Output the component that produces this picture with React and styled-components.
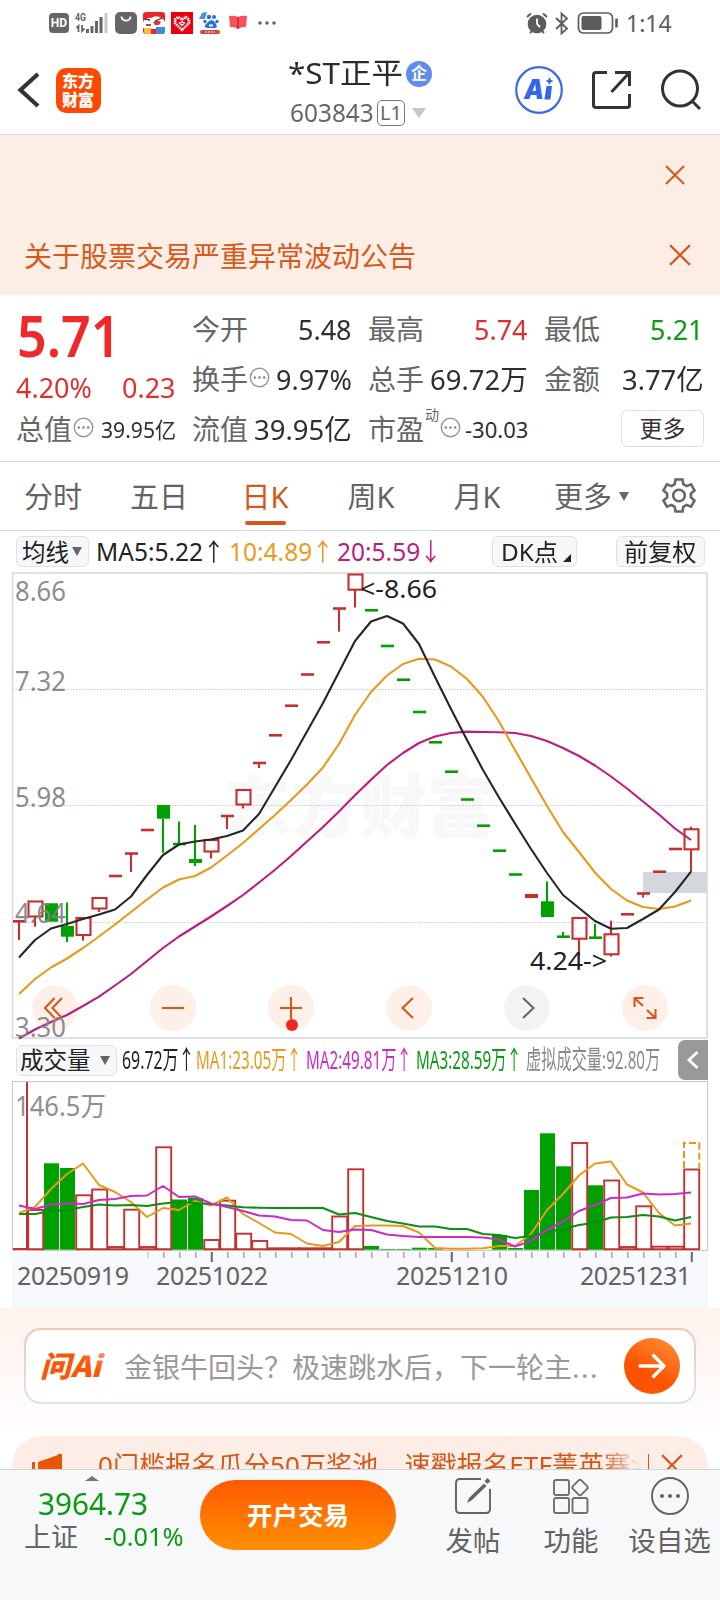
import React, { useLayoutEffect, useRef, useState } from 'react';
import styled, { createGlobalStyle, css } from 'styled-components';

const GlobalStyle = createGlobalStyle`
  * { box-sizing: border-box; }
  body {
    margin: 0;
    background: #fff;
    color: #2b2b2b;
    font-family: 'Noto Sans', 'Noto Sans CJK SC', sans-serif;
  }
  svg { display: block; flex: none; overflow: visible; }
`

const RED = '#c5302f';
const GREEN = '#00a000';
const ORANGE = '#e8991c';
const PURPLE = '#bd1b80';

const Screen = styled.div`
  width: 720px;
  height: 1600px;
  overflow: hidden;
  display: flex;
  flex-direction: column;
  background: #fff;
`

/* text squeezed to a fixed width */
const FitBox = styled.span`
  display: inline-block;
  flex: none;
  width: ${p => p.$w}px;
  white-space: nowrap;
  span {
    display: inline-block;
    transform-origin: left center;
  }
`

const Fit = ({ w, children, className }) => {
  const ref = useRef(null);
  const [scale, setScale] = useState(1);

  useLayoutEffect(() => {
    setScale(w / ref.current.offsetWidth);
  }, [w, children]);

  return (
    <FitBox $w={w} className={className}>
      <span ref={ref} style={{ transform: `scaleX(${scale})` }}>{children}</span>
    </FitBox>
  );
};

/* ---------- status bar ---------- */

const StatusBar = styled.div`
  height: 46px;
  padding: 0 48px 0 49px;
  display: flex;
  align-items: center;
  justify-content: space-between;
`

const StatusGroup = styled.div`
  display: flex;
  align-items: center;
  gap: ${p => p.$gap}px;
`

const HdBadge = styled.div`
  width: 20px;
  height: 20px;
  border-radius: 4px;
  background: #666;
  color: #fff;
  font: 700 12px/20px 'Roboto', sans-serif;
  text-align: center;
`

const Clock = styled.div`
  font-size: 23px;
  line-height: 24px;
  margin-left: 2px;
  color: #5c5c5c;
`

const Status = () => (
  <StatusBar>
    <StatusGroup $gap={6}>
      <HdBadge>HD</HdBadge>
      <svg width="34" height="22" viewBox="0 0 34 22">
        <text x="0" y="9" fontSize="10.500" fontWeight="700" fontFamily="Roboto" fill="#666" textLength="11" lengthAdjust="spacingAndGlyphs">4G</text>
        <path d="M3.500 20v-6l-2 2M7 13v6l2.500-2.500" stroke="#666" strokeWidth="1.800" fill="none" />
        <path d="M12.500 17v4M17 14v7M21.500 9v12M26 5v16" stroke="#666" strokeWidth="3" />
        <path d="M31 1v20" stroke="#c8c8c8" strokeWidth="3" />
      </svg>
      <svg width="22" height="22" viewBox="0 0 22 22">
        <rect width="22" height="22" rx="5" fill="#666" />
        <path d="M6.500 4.500c0 5.500 9 5.500 9 0" stroke="#fff" strokeWidth="1.800" fill="none" />
      </svg>
      <svg width="22" height="22" viewBox="0 0 22 22">
        <rect width="22" height="22" rx="3" fill="#e8262c" />
        <path d="M0 10Q3 5 8 6q6-4 12 1l2 3v7H9l-9-1Z" fill="#fff" />
        <path d="M10 10q5-3 8 0l-2 3h-4Z" fill="#d63a36" />
        <path d="M2 7l5 1M12 9l7-3M3 13h5" stroke="#55282a" strokeWidth="1.300" />
        <path d="M1 16h7v6H3q-2 0-2-2Z" fill="#fbbf2c" />
        <path d="M13 15h9v4q0 3-3 3h-6Z" fill="#3f8ae6" />
      </svg>
      <svg width="22" height="22" viewBox="0 0 22 22">
        <rect width="22" height="22" fill="#e60012" />
        <path d="M11 18L4 11V7.500L7 5l4 2.500L15 5l3 2.500V11Z" fill="none" stroke="#fff" strokeWidth="2.600" strokeDasharray="1.500 .7" />
        <path d="M11 13.500L8.500 11l2.500-1 2.500 1Z" fill="none" stroke="#fff" strokeWidth="1.200" />
      </svg>
      <svg width="23" height="22" viewBox="0 0 23 22">
        <path d="M0 7l3-6 5-1-2 7Z" fill="#4a90e2" />
        <g fill="#2a70d8">
          <circle cx="10" cy="5" r="2.200" /><circle cx="15" cy="5" r="2" />
          <circle cx="6" cy="9.500" r="1.700" /><circle cx="18" cy="9.500" r="1.700" />
          <path d="M12 8q3 0 5 4t-1 4H8q-4-1-1-4t5-4Z" />
        </g>
        <path d="M10 12.500h4v2h-4Z" fill="#fff" />
        <rect x="1" y="18" width="20" height="4" rx="2" fill="#d4443c" />
        <path d="M6 20h10" stroke="#fff" strokeDasharray="2 1" />
      </svg>
      <svg width="20" height="16" viewBox="0 0 20 16">
        <path d="M1 1q5-1 9 1 4-2 9-1l-1 11q-5-.5-8 2-3-2.500-8-2Z" fill="#f5525c" />
        <path d="M10 2v12" stroke="#cc2b3b" strokeWidth="1.500" />
      </svg>
      <svg width="22" height="4" viewBox="0 0 22 4" fill="#666">
        <circle cx="6" cy="2" r="1.800" /><circle cx="13" cy="2" r="1.800" /><circle cx="20" cy="2" r="1.800" />
      </svg>
    </StatusGroup>
    <StatusGroup $gap={6}>
      <svg width="22" height="22" viewBox="0 0 22 22">
        <circle cx="11" cy="12" r="9.300" fill="#5c5c5c" />
        <path d="M1 5l4-3.500M21 5l-4-3.500M4 21l2-2M18 21l-2-2" stroke="#5c5c5c" strokeWidth="2" />
        <path d="M11 6.500V12l3 3" stroke="#fff" strokeWidth="1.800" fill="none" />
      </svg>
      <svg width="16" height="23" viewBox="0 0 16 23">
        <path d="M2 6l11 10.500-5.500 5V1.500l5.500 5L2 17" stroke="#5c5c5c" strokeWidth="1.800" fill="none" />
      </svg>
      <svg width="42" height="22" viewBox="0 0 42 22">
        <rect x="2.500" y="1" width="34" height="20" rx="5" fill="none" stroke="#5c5c5c" strokeWidth="1.700" />
        <rect x="5.500" y="4" width="20" height="14" rx="2" fill="#5c5c5c" />
        <path d="M40.500 6.500v9" stroke="#5c5c5c" strokeWidth="2.600" />
      </svg>
      <Clock><Fit w={46}>1:14</Fit></Clock>
    </StatusGroup>
  </StatusBar>
);

/* ---------- title bar ---------- */

const TitleBar = styled.header`
  height: 89px;
  padding: 0 18px 0 17px;
  display: grid;
  grid-template-columns: 1fr auto 1fr;
  align-items: center;
  border-bottom: 1px solid #d8dad8;
`

const TitleSide = styled.div`
  display: flex;
  align-items: center;
  justify-content: ${p => (p.$end ? 'flex-end' : 'flex-start')};
  gap: ${p => (p.$end ? 28.500 : 15.500)}px;
`

const BrandLogo = styled.div`
  width: 45px;
  height: 45px;
  padding: 3px 0;
  border-radius: 10px;
  background: #fe4a00;
  color: #fff;
  font-family: 'Noto Sans CJK SC', sans-serif;
  font-size: 16px;
  font-weight: 900;
  line-height: 19px;
  text-align: center;
`

const StockName = styled.div`
  display: flex;
  align-items: center;
  gap: 3px;
  height: 40px;
  padding-left: 1px;
  font-size: 29px;
  line-height: 36px;
  > span { margin-top: -1px; }
`

const CompanyBadge = styled.div`
  width: 26px;
  height: 26px;
  border-radius: 50%;
  background: #5f8eea;
  color: #fff;
  font-size: 16px;
  font-weight: 700;
  line-height: 25px;
  text-align: center;
`

const StockCode = styled.div`
  display: flex;
  align-items: center;
  gap: 3px;
  height: 30px;
  margin-top: 3px;
  padding-left: 3px;
  font-size: 25px;
  line-height: 28px;
  color: #666;
`

const LevelTag = styled.div`
  width: 28px;
  height: 26px;
  margin-top: 2px;
  border: 1.500px solid #777;
  border-radius: 5px;
  font-size: 20px;
  line-height: 23px;
  text-align: center;
`

const Caret = styled.i`
  flex: none;
  border: ${p => p.$size}px solid transparent;
  border-top: ${p => p.$tall || p.$size * 1.500}px solid ${p => p.color || '#666'};
  border-bottom: 0;
`

const CodeCaret = styled(Caret)`
  margin: 2px 0 0 4px;
`

const Title = () => (
  <TitleBar>
    <TitleSide>
      <svg width="23" height="36" viewBox="0 0 23 36">
        <path d="M21 2L3.500 18 21 34" stroke="#333" strokeWidth="4.200" fill="none" />
      </svg>
      <BrandLogo>东方<br />财富</BrandLogo>
    </TitleSide>
    <div>
      <StockName><Fit w={115}>*ST正平</Fit><CompanyBadge>企</CompanyBadge></StockName>
      <StockCode>
        <Fit w={84}>603843</Fit><LevelTag>L1</LevelTag><CodeCaret $size={7} $tall={10} color="#c6c6c6" />
      </StockCode>
    </div>
    <TitleSide $end>
      <svg width="48" height="48" viewBox="0 0 48 48">
        <circle cx="24" cy="24" r="22.800" fill="none" stroke="#3a68ec" strokeWidth="2.200" />
        <text x="9" y="33" fontFamily="Inter" fontSize="27" fontWeight="900" fontStyle="italic" fill="#3366f0" textLength="20" lengthAdjust="spacingAndGlyphs">A</text>
        <path d="M31.500 20h5.500l-1.600 13.500h-6Z" fill="#3366f0" />
        <path d="M34.500 11l1.300 2.700 2.700 1.300-2.700 1.300-1.300 2.700-1.300-2.700-2.700-1.300 2.700-1.300Z" fill="#3366f0" />
      </svg>
      <svg width="40" height="40" viewBox="0 0 40 40" fill="none" stroke="#333" strokeWidth="3">
        <path d="M15 2.500H4q-2.500 0-2.500 2.500v30q0 2.500 2.500 2.500h31q2.500 0 2.500-2.500V24M23 2.500h14.500V16M37.500 2.500L19.500 22" />
      </svg>
      <svg width="42" height="42" viewBox="0 0 42 42" fill="none" stroke="#333" strokeWidth="3">
        <circle cx="20" cy="19.500" r="17.500" /><path d="M32 32l8 8" />
      </svg>
    </TitleSide>
  </TitleBar>
);

/* ---------- notices ---------- */

const Notices = styled.section`
  height: 160px;
  background: #fdeee5;
  color: #d75a1c;
`

const NoticeRow = styled.div`
  height: 80px;
  padding: 0 ${p => p.$right}px 0 24px;
  display: flex;
  align-items: center;
  justify-content: space-between;
  font-size: 28px;
  line-height: 40px;
  span { margin-top: 1px; }
`

const Cross = ({ size }) => (
  <svg width={size} height={size} viewBox="0 0 20 20">
    <path d="M1 1l18 18M19 1L1 19" stroke="#d75a1c" strokeWidth="2" />
  </svg>
);

/* ---------- quote ---------- */

const Quote = styled.section`
  height: 167px;
  padding: 8px 16px 0;
  display: grid;
  grid-template-columns: 160px 160px 160px 160px;
  column-gap: 16px;
  border-bottom: 1px solid #d9d9d9;
`

const Price = styled.div`
  height: 66px;
  padding: 2px 0 0 1px;
  font-size: 57px;
  font-weight: 600;
  line-height: 61px;
  color: #ef2929;
`

const Change = styled.div`
  height: 34px;
  padding-top: 2px;
  display: flex;
  justify-content: space-between;
  font-size: 28px;
  line-height: 32px;
  color: #dd3030;
`

const Field = styled.div`
  height: 50px;
  padding-top: 2px;
  display: flex;
  align-items: center;
  justify-content: space-between;
  font-size: 28px;
  line-height: 40px;
  color: #666;
`

const FieldLabel = styled.div`
  display: flex;
  align-items: center;
  sup {
    align-self: flex-start;
    margin: -4px 0 0 1px;
    font-size: 14px;
    line-height: 20px;
  }
  svg { margin: -4px 0 0 1px; }
`

const tones = { up: '#dd3030', down: '#0b9a12' };

const FieldValue = styled.div`
  color: ${p => tones[p.$tone] || '#2f2f2f'};
  ${p => p.$small && css`
    font-size: 22px;
  `}
`

const MoreButton = styled.button`
  width: 83px;
  height: 37px;
  margin: 7px 0 0 auto;
  padding: 0 0 4px;
  display: block;
  border: 1.500px solid #dcdee0;
  border-radius: 6px;
  background: #fff;
  color: #333;
  font: 23px/30px 'Noto Sans CJK SC', sans-serif;
`

const Dots = () => (
  <svg width="21" height="21" viewBox="0 0 21 21">
    <circle cx="10.500" cy="10.500" r="9.200" fill="none" stroke="#999" strokeWidth="1.500" />
    <g fill="#888"><circle cx="5.800" cy="10.500" r="1.300" /><circle cx="10.500" cy="10.500" r="1.300" /><circle cx="15.200" cy="10.500" r="1.300" /></g>
  </svg>
);

const QuoteField = ({ label, value, w, tone, small, sup, dots }) => (
  <Field>
    <FieldLabel>{label}{sup && <sup>{sup}</sup>}{dots && <Dots />}</FieldLabel>
    <FieldValue $tone={tone} $small={small}><Fit w={w}>{value}</Fit></FieldValue>
  </Field>
);

/* ---------- period tabs ---------- */

const Tabs = styled.nav`
  height: 69px;
  display: flex;
  border-bottom: 1px solid #d9d9d9;
`

const Tab = styled.div`
  width: 106px;
  padding-top: 15px;
  display: flex;
  flex-direction: column;
  align-items: center;
  gap: 4px;
  font-size: 29px;
  line-height: 40px;
  color: ${p => (p.$active ? '#d4581a' : '#636363')};
  &::after {
    content: '';
    width: 41px;
    height: 4px;
    border-radius: 2px;
    background: ${p => (p.$active ? '#d4581a' : 'transparent')};
  }
`

const MoreTab = styled.div`
  width: 107px;
  padding: 1px 0 0 24px;
  display: flex;
  align-items: center;
  gap: 7px;
  font-size: 29px;
  line-height: 40px;
  color: #636363;
  i { margin-top: -1px; }
`

const GearCell = styled.div`
  padding: 16px 0 0 25px;
`

/* ---------- indicator rows ---------- */

const IndicatorRow = styled.div`
  height: ${p => p.$h}px;
  padding-left: 16px;
  display: flex;
  align-items: center;
`

const Pill = styled.div`
  flex: none;
  width: ${p => p.$w}px;
  height: 31px;
  margin-left: ${p => p.$ml || 0}px;
  padding: 0 6px 0 ${p => p.$pl || 6}px;
  display: flex;
  align-items: center;
  justify-content: space-between;
  border: 1.500px solid #dde0e4;
  border-radius: 6px;
  background: #f6f7f9;
  color: #222;
  font-size: 23.500px;
  line-height: 26px;
`

const Corner = styled.i`
  align-self: flex-end;
  margin: 0 -1px 4px 0;
  border-left: 8px solid transparent;
  border-bottom: 8px solid #222;
`

const Average = styled.div`
  margin-left: ${p => p.$ml}px;
  padding-bottom: ${p => (p.$size ? 2 : 0)}px;
  display: flex;
  color: ${p => p.color};
  font-size: ${p => p.$size || 24.500}px;
  line-height: 28px;
`

const Collapse = styled.button`
  width: 30px;
  height: 40px;
  margin: 0 12px 0 auto;
  padding: 0 0 0 9px;
  border: 0;
  border-radius: 7px 0 0 7px;
  background: #999;
`

/* ---------- charts ---------- */

const slot = i => 19 + 16 * i;
const line = ys => ys.map((y, i) => `${slot(i)},${y}`).join(' ');

// kind, body top, body bottom, wick top, wick bottom
const candles = [
  ['r', 921.3, 921.3, 921.3, 940], ['r', 901.5, 916.5, 916.5, 926.7], ['g', 903.3, 921.7], ['g', 926, 936.7, 902.5, 942],
  ['r', 918, 935, 935, 940.7], ['r', 898, 908.5, 908.5, 912], ['r', 876, 876], ['r', 853.5, 853.5, 853.5, 872],
  ['r', 830, 830], ['g', 805, 818.7, 818.7, 852.7], ['g', 844, 844, 821.5, 845], ['g', 859, 863, 825, 866],
  ['r', 840, 851.5, 851.5, 858.5], ['r', 816, 816, 816, 829], ['r', 790, 804.5, 804.5, 808.5], ['r', 763, 763, 763, 768],
  ['r', 735.3, 735.3], ['r', 705.7, 705.7], ['r', 674.5, 674.5], ['r', 642.3, 642.3], ['r', 608.5, 608.5, 608.5, 631.7],
  ['r', 574.5, 589.7, 589.7, 607.5], ['g', 610.3, 610.3], ['g', 646, 646], ['g', 679.7, 679.7], ['g', 712, 712],
  ['g', 742.3, 742.3], ['g', 771.7, 771.7], ['g', 799.5, 799.5], ['g', 825.7, 825.7], ['g', 850.7, 850.7],
  ['g', 874.5, 874.5], ['b', 894, 898], ['g', 901.3, 917, 881.5, 917], ['g', 936.7, 936.7, 932, 937],
  ['r', 918, 938.7, 938.7, 955.5], ['g', 937.7, 937.7, 924, 938], ['r', 934.3, 954.3, 920.7, 956.5], ['r', 914.3, 914.3],
  ['r', 893.5, 893.5, 893.5, 897.5], ['r', 871.7, 871.7], ['r', 849, 849], ['r', 829.3, 849.3, 826.7, 872],
];

const ma5 = [957.5, 940, 928.5, 924, 919, 914.5, 909.5, 896.5, 875, 855, 844.5, 841.5, 839.5, 836, 830.5, 814, 787, 760, 731.500,
  703, 672, 641, 621.5, 616, 623.5, 644, 677, 709, 740, 770, 797.5, 823.5, 849, 873, 895, 908, 921, 928.7, 928, 919, 909.5, 892, 871.7];
const ma10 = [994, 979, 967.5, 958.5, 948, 936.5, 924.5, 912, 899.5, 887.5, 879.5, 876, 867.5, 855.5, 843, 829, 815, 800, 784.5,
  767.5, 744, 715, 692, 675.5, 664, 658.7, 659.5, 666.5, 679, 697, 721.5, 750, 778, 806, 832, 852, 872.5, 889, 900.5, 907, 909, 906.5, 900.5];
const ma20 = [1038.5, 1029.5, 1022, 1015, 1006, 996.7, 985.5, 974, 961, 948, 936.5, 926.5, 916.5, 906, 895, 882.5, 869.7, 856, 841.5,
  827, 811.5, 795.3, 779.7, 765, 753, 743, 736.5, 733, 731.6, 732, 732.3, 733, 736, 741, 748, 756, 765.5, 776.5, 788.5, 801.5, 814.5, 828.5, 840];

const Candle = ({ x, data }) => {
  const [kind, top, bottom, high, low] = data;
  const color = kind === 'g' ? GREEN : RED;
  const flat = bottom - top < 1;
  return (
    <g stroke={color} strokeWidth="2.100">
      {kind === 'r' && !flat && (
        <>
          {high < top && <path d={`M${x} ${high}V${top}`} />}
          {low > bottom && <path d={`M${x} ${bottom}V${low}`} />}
          <rect x={x - 6.500} y={top} width="14" height={bottom - top} fill="#fff" />
        </>
      )}
      {kind !== 'r' && !flat && <rect x={x - 6} y={top} width="13" height={bottom - top} fill={color} stroke="none" />}
      {flat && <path d={`M${x - 6} ${top}h13`} strokeWidth="2.600" />}
      {high && (kind !== 'r' || flat) && <path d={`M${x} ${high}V${low}`} />}
    </g>
  );
};

const PriceChart = () => (
  <svg width="720" height="468" viewBox="0 572 720 468">
    <text x="223" y="832" fontSize="68" fontFamily="Noto Sans CJK SC" fontWeight="900" fill="#f8f8f8" textLength="272">东方财富</text>
    <rect x="12.500" y="573" width="694.500" height="465" fill="none" stroke="#dcdcdc" strokeWidth="1.700" />
    <path d="M13 689.500H707M13 805.500H707M13 922.500H707" stroke="#c9c9c9" strokeDasharray="1.500 1.500" />
    <rect x="643" y="872" width="64" height="21" fill="#d4d8dd" />
    {candles.map((c, i) => <Candle key={i} x={slot(i)} data={c} />)}
    {[55, 173, 291, 409, 527, 645].map(x => (
      <circle key={x} cx={x} cy="1008" r="23" fill={x === 527 ? '#f3f3f4' : '#fef0e8'} />
    ))}
    <g fill="none" strokeWidth="2.100" strokeLinejoin="round">
      <polyline points={line(ma20)} stroke={PURPLE} />
      <polyline points={line(ma10)} stroke={ORANGE} />
      <polyline points={line(ma5)} stroke="#262626" />
    </g>
    <g fill="none" stroke="#d4581a" strokeWidth="2.100">
      <path d="M54.500 998l-9.500 10 9.500 10M62 998l-9.500 10 9.500 10" />
      <path d="M162 1008h22M280 1008h22M291 997v22" />
      <path d="M413 998l-10.500 10 10.500 10" />
      <path d="M523 998l10.500 10-10.500 10" stroke="#666" />
      <path d="M634.500 1007v-9h9M635 998.500l8 7.500M655.500 1009v9h-9M655 1017.500l-8-7.500" />
    </g>
    <circle cx="292" cy="1025" r="6" fill="#f02822" />
    <g fontSize="26.500" fill="#858585" fillOpacity=".95">
      <text x="15" y="600.500" textLength="51" lengthAdjust="spacingAndGlyphs">8.66</text>
      <text x="15" y="690.500" textLength="51" lengthAdjust="spacingAndGlyphs">7.32</text>
      <text x="15" y="807" textLength="51" lengthAdjust="spacingAndGlyphs">5.98</text>
      <text x="15" y="923" textLength="51" lengthAdjust="spacingAndGlyphs">4.64</text>
      <text x="15" y="1036.500" textLength="51" lengthAdjust="spacingAndGlyphs">3.30</text>
    </g>
    <g fontSize="25.500" fill="#222">
      <text x="360" y="597.500" textLength="77" lengthAdjust="spacingAndGlyphs">&lt;-8.66</text>
      <text x="530" y="970" textLength="77" lengthAdjust="spacingAndGlyphs">4.24-&gt;</text>
    </g>
  </svg>
);

// r: hollow rising bar, g: filled falling bar
const volumes = [
  null, ['r', 1210], ['g', 1163.3], ['g', 1168], ['r', 1195.3], ['r', 1189.5], ['r', 1247], ['r', 1209.7], ['r', 1247],
  ['r', 1147.3], ['g', 1199.5], ['g', 1198], ['r', 1240], ['r', 1200.7], ['r', 1233.7], ['r', 1241], ['r', 1248.3],
  ['r', 1248.3], ['r', 1248.3], ['r', 1248.3], ['r', 1216.5], ['r', 1169.3], ['g', 1246], ['g', 1249], ['g', 1249],
  ['g', 1247.7], ['g', 1248], null, null, null, ['g', 1235], ['g', 1248], ['g', 1190], ['g', 1133.3], ['g', 1166.3],
  ['r', 1143], ['g', 1185.3], ['r', 1180.500], ['r', 1247], ['r', 1206.3], ['r', 1246.7], ['r', 1246.7], ['r', 1169.5],
];

const vol1 = [1213, 1207, 1189, 1174, 1163.5, 1185, 1192, 1202, 1217, 1208, 1210, 1201, 1205.5, 1197.5, 1214, 1223, 1232.5, 1234,
  1243.5, 1246, 1242, 1226, 1225.5, 1225.5, 1226, 1232.5, 1248, 1248.7, 1248.7, 1248.3, 1246, 1246, 1234, 1210, 1194, 1175.5, 1163.5,
  1161.5, 1184.5, 1192.5, 1213, 1225.5, 1223.5];
const vol2 = [1205.5, 1209, 1204.5, 1203.3, 1204, 1200, 1199, 1196, 1195.5, 1186, 1197, 1196.5, 1203.5, 1207, 1211, 1215.5, 1216.5,
  1220, 1220.5, 1230, 1232, 1229.5, 1230, 1234.5, 1236, 1237, 1237, 1237, 1237, 1237.5, 1239.5, 1246.5, 1241, 1230, 1221.5, 1211, 1205,
  1198, 1197.5, 1193.5, 1194.5, 1194, 1192.5];
const vol3 = [1214, 1214, 1211, 1210, 1207, 1204.5, 1205.5, 1205, 1206, 1203.5, 1202, 1203, 1204, 1205.5, 1207.3, 1207.7, 1208, 1208,
  1208, 1208, 1214.5, 1213, 1217, 1221, 1223.5, 1226.5, 1226.5, 1229, 1229, 1234, 1235, 1238, 1236, 1232, 1229, 1225, 1222.5, 1217.5,
  1217, 1215, 1216.5, 1220.5, 1217];

const VolumeChart = () => (
  <svg width="720" height="228" viewBox="0 1080 720 228">
    <rect x="12" y="1251" width="696" height="57" fill="#f7f8fb" />
    <rect x="12.500" y="1081.500" width="695" height="169" fill="#fff" stroke="#c8c8c8" />
    <text x="15" y="1116" fontSize="27" fill="#8f8f8f" textLength="91" lengthAdjust="spacingAndGlyphs">146.5万</text>
    <path d="M27 1082V1249H13" fill="none" stroke={RED} strokeWidth="2" />
    {volumes.map((v, i) => v && (v[0] === 'g'
      ? <rect key={i} x={slot(i) - 7} y={v[1]} width="15" height={1249.7 - v[1]} fill={GREEN} />
      : <rect key={i} x={slot(i) - 6.800} y={v[1]} width="15" height={1249.2 - v[1]} fill="#fff" stroke={RED} strokeWidth="1.900" />
    ))}
    <path d="M684 1168V1143H699.300V1168" fill="none" stroke={ORANGE} strokeWidth="2" strokeDasharray="7 3" />
    <g fill="none" strokeWidth="2" strokeLinejoin="round">
      <polyline points={line(vol1)} stroke={ORANGE} />
      <polyline points={line(vol3)} stroke="#0a8f14" />
      <polyline points={line(vol2)} stroke="#c92bc8" />
    </g>
    {volumes.map((v, i) => i > 7 && (
      <path
        key={i}
        d={`M${slot(i) + 0.800} 1252V${i % 15 === 12 ? 1262 : 1258}`}
        stroke={i % 15 === 12 ? '#666' : i === 8 ? '#ccc' : '#a8a8a8'}
        strokeWidth={i % 15 === 12 ? 2 : 1.500}
      />
    ))}
    <g fontSize="25" fill="#636363">
      <text x="17" y="1285" textLength="112">20250919</text>
      <text x="156" y="1285" textLength="112">20251022</text>
      <text x="396" y="1285" textLength="112">20251210</text>
      <text x="580" y="1285" textLength="111">20251231</text>
    </g>
  </svg>
);

/* ---------- ask box and promo ---------- */

const AskSection = styled.section`
  height: 128px;
  padding: 20px 24px 0;
  background: linear-gradient(#fff2ed, #fff);
`

const AskBox = styled.div`
  height: 76px;
  padding: 0 14px;
  display: flex;
  align-items: center;
  border: 2px solid transparent;
  border-radius: 17px;
  background: linear-gradient(#fff, #fff) padding-box, linear-gradient(#f8c4b8, #dbe4f3) border-box;
`

const AskHint = styled.div`
  flex: 1;
  margin-left: 19px;
  padding-top: 1px;
  font-size: 28px;
  line-height: 40px;
  color: #999;
  white-space: nowrap;
  span { letter-spacing: 1.500px; }
`

const AskGo = styled.button`
  width: 56px;
  height: 56px;
  margin-top: -1px;
  padding: 0 14px;
  border: 0;
  border-radius: 50%;
  background: linear-gradient(30deg, #fe5300 40%, #ff9440);
`

const AskLogo = () => (
  <svg width="65" height="30" viewBox="0 0 65 30">
    <defs>
      <linearGradient id="ask" x1="0" y1="1" x2="1" y2="0">
        <stop offset=".6" stopColor="#fa5605" /><stop offset="1" stopColor="#f7b08c" />
      </linearGradient>
    </defs>
    <text
      x="0" y="26" fontSize="29" fontFamily="'Noto Sans CJK SC'" fontWeight="900" fontStyle="italic"
      fill="url(#ask)" textLength="61" lengthAdjust="spacingAndGlyphs"
    >
      问Ai
    </text>
  </svg>
);

const Promo = styled.div`
  flex: 1;
  min-height: 0;
  margin: 0 12px;
  padding: 12px 24px 0 20px;
  display: flex;
  align-items: flex-start;
  overflow: hidden;
  border-radius: 30px 30px 0 0;
  background: #fceee6;
  color: #d4581a;
  svg { margin-top: 6px; }
`

const PromoText = styled.div`
  width: 544px;
  margin-left: 36px;
  overflow: hidden;
  white-space: pre;
  font-size: 26px;
  line-height: 35px;
  letter-spacing: .15px;
  mask-image: linear-gradient(90deg, #000 92%, transparent);
`

const PromoRule = styled.i`
  width: 1px;
  height: 30px;
  margin: 6px 12px 0 6px;
  background: #d4581a;
`

/* ---------- bottom bar ---------- */

const BottomBar = styled.footer`
  flex: none;
  height: 131px;
  padding: 6px 0 0 24px;
  display: flex;
  align-items: flex-start;
  border-top: 1px solid #d2d3d5;
  background: #f7f8fa;
`

const IndexBlock = styled.div`
  width: 176px;
  display: flex;
  flex-direction: column;
`

const IndexArrow = styled.i`
  width: 14px;
  margin-left: 61px;
  border: 7px solid transparent;
  border-bottom: 5px solid #777;
  border-top: 0;
`

const IndexValue = styled.div`
  height: 38px;
  padding: 3px 0 0 14px;
  font-size: 30px;
  line-height: 39px;
  color: #0b9a12;
`

const IndexChange = styled.div`
  display: flex;
  align-items: center;
  justify-content: space-between;
  padding: 2px 17px 0 0;
  font-size: 27px;
  line-height: 32px;
  color: #666;
  em {
    margin-top: -2px;
    font-style: normal;
    font-size: 25px;
    color: #0b9a12;
  }
`

const TradeButton = styled.button`
  width: 196px;
  height: 70px;
  margin: 4px 31px 0 0;
  padding: 0 0 2px;
  border: 0;
  border-radius: 35px;
  background: linear-gradient(#fe5a00, #ff8f00);
  color: #fff;
  font: 700 25.500px/34px 'Noto Sans CJK SC', sans-serif;
`

const Action = styled.div`
  width: ${p => p.$w}px;
  padding-top: 1px;
  display: flex;
  flex-direction: column;
  align-items: center;
  gap: 8px;
  font-size: 27.500px;
  line-height: 36px;
  color: #636363;
  white-space: nowrap;
`

const averages = [
  { label: 'MA5:5.22', w: 107, arrow: '↑', color: '#222', ml: 7 },
  { label: '10:4.89', w: 83, arrow: '↑', color: '#eb9a1d', ml: 4 },
  { label: '20:5.59', w: 83, arrow: '↓', color: PURPLE, ml: 3 },
];

const volumeLabels = [
  { label: '69.72万↑', w: 72, color: '#222', ml: 5 },
  { label: 'MA1:23.05万↑', w: 106, color: ORANGE, ml: 2 },
  { label: 'MA2:49.81万↑', w: 106, color: '#c92bc8', ml: 4 },
  { label: 'MA3:28.59万↑', w: 106, color: '#0b9a12', ml: 4 },
  { label: '虚拟成交量:92.80万', w: 134, color: '#8a8a8a', ml: 4 },
];

const App = () => (
  <>
    <GlobalStyle />
    <Screen>
      <Status />
      <Title />
      <Notices>
        <NoticeRow $right={35}><span /><Cross size={20} /></NoticeRow>
        <NoticeRow $right={29}><span>关于股票交易严重异常波动公告</span><Cross size={22} /></NoticeRow>
      </Notices>

      <Quote>
        <div>
          <Price><Fit w={104}>5.71</Fit></Price>
          <Change><Fit w={76}>4.20%</Fit><Fit w={54}>0.23</Fit></Change>
          <QuoteField label="总值" value="39.95亿" w={75} small dots />
        </div>
        <div>
          <QuoteField label="今开" value="5.48" w={54} />
          <QuoteField label="换手" value="9.97%" w={76} dots />
          <QuoteField label="流值" value="39.95亿" w={98} />
        </div>
        <div>
          <QuoteField label="最高" value="5.74" w={54} tone="up" />
          <QuoteField label="总手" value="69.72万" w={98} />
          <QuoteField label="市盈" value="-30.03" w={63} sup="动" small dots />
        </div>
        <div>
          <QuoteField label="最低" value="5.21" w={54} tone="down" />
          <QuoteField label="金额" value="3.77亿" w={82} />
          <MoreButton>更多</MoreButton>
        </div>
      </Quote>

      <Tabs>
        {['分时', '五日', '日K', '周K', '月K'].map(t => <Tab key={t} $active={t === '日K'}>{t}</Tab>)}
        <MoreTab>更多<Caret $size={5} $tall={9} /></MoreTab>
        <GearCell>
          <svg width="34" height="36" viewBox="0 0 34 36" fill="none" stroke="#666" strokeWidth="2.600">
            <path d="M13.500 1.500h7l.8 4.700 3.200 1.900 4.600-1.700 3.400 6-3.600 3.100v4l3.600 3.100-3.400 6-4.600-1.700-3.200 1.900-.8 4.700h-7l-.8-4.700-3.200-1.900-4.600 1.700-3.400-6 3.600-3.100v-4l-3.600-3.100 3.400-6 4.600 1.700 3.200-1.900Z" />
            <circle cx="17" cy="17.500" r="5.800" />
          </svg>
        </GearCell>
      </Tabs>

      <IndicatorRow $h={41}>
        <Pill $w={73} $pl={5}>均线<Caret $size={5} $tall={9} /></Pill>
        {averages.map(a => (
          <Average key={a.label} color={a.color} $ml={a.ml}>
            <Fit w={a.w}>{a.label}</Fit><Fit w={22}>{a.arrow}</Fit>
          </Average>
        ))}
        <Pill $w={85} $ml={50} $pl={8}><Fit w={57}>DK点</Fit><Corner /></Pill>
        <Pill $w={89} $ml={39} $pl={7}><Fit w={73}>前复权</Fit></Pill>
      </IndicatorRow>
      <PriceChart />
      <IndicatorRow $h={40}>
        <Pill $w={101} $pl={3}>成交量<Caret $size={5} $tall={9} /></Pill>
        {volumeLabels.map(v => (
          <Average key={v.label} color={v.color} $ml={v.ml} $size={26}><Fit w={v.w}>{v.label}</Fit></Average>
        ))}
        <Collapse>
          <svg width="12" height="20" viewBox="0 0 12 20">
            <path d="M10.500 2L2 10l8.500 8" stroke="#fff" strokeWidth="2.800" fill="none" />
          </svg>
        </Collapse>
      </IndicatorRow>
      <VolumeChart />

      <AskSection>
        <AskBox>
          <AskLogo />
          <AskHint>金银牛回头？极速跳水后，下一轮主<span>...</span></AskHint>
          <AskGo>
            <svg width="28" height="26" viewBox="0 0 28 26" fill="none" stroke="#fff" strokeWidth="3.400" strokeLinecap="round" strokeLinejoin="round">
              <path d="M2 13h24M15.500 2.500L26 13 15.500 23.500" />
            </svg>
          </AskGo>
        </AskBox>
      </AskSection>
      <Promo>
        <svg width="30" height="30" viewBox="0 0 30 30" fill="#ea5504">
          <path d="M0 8h3v15H0ZM6 8l20-7V0h4v28H26L6 22Z" />
        </svg>
        <PromoText>{'0门槛报名瓜分50万奖池　速戳报名ETF菁英赛>'}</PromoText>
        <PromoRule />
        <Cross size={22} />
      </Promo>

      <BottomBar>
        <IndexBlock>
          <IndexArrow />
          <IndexValue><Fit w={110}>3964.73</Fit></IndexValue>
          <IndexChange>上证<em><Fit w={79}>-0.01%</Fit></em></IndexChange>
        </IndexBlock>
        <TradeButton>开户交易</TradeButton>
        <Action $w={92}>
          <svg width="38" height="38" viewBox="0 0 38 38" fill="none" stroke="#636363" strokeWidth="1.900">
            <path d="M27 2H6Q2 2 2 6v26q0 4 4 4h26q4 0 4-4V12" />
            <path d="M13 26l2-5L30 6.500l2.500 2.500L18 23Z" fill="#636363" stroke="none" />
            <path d="M32 5.500l3-3" strokeWidth="4" />
          </svg>
          发帖
        </Action>
        <Action $w={104}>
          <svg width="38" height="38" viewBox="0 0 38 38" fill="none" stroke="#707070" strokeWidth="1.900">
            <rect x="2" y="3" width="15" height="15" rx="2" /><rect x="2" y="21" width="15" height="15" rx="2" />
            <rect x="20.500" y="21" width="15" height="15" rx="2" />
            <rect x="22" y="4.500" width="12" height="12" rx="2" transform="rotate(45 28 10.500)" />
          </svg>
          功能
        </Action>
        <Action $w={93}>
          <svg width="38" height="38" viewBox="0 0 38 38" fill="none" stroke="#636363" strokeWidth="1.900">
            <circle cx="19" cy="19" r="18" />
            <g fill="#636363" stroke="none"><circle cx="11" cy="19" r="2" /><circle cx="19" cy="19" r="2" /><circle cx="27" cy="19" r="2" /></g>
          </svg>
          设自选
        </Action>
      </BottomBar>
    </Screen>
  </>
);

export default App;
